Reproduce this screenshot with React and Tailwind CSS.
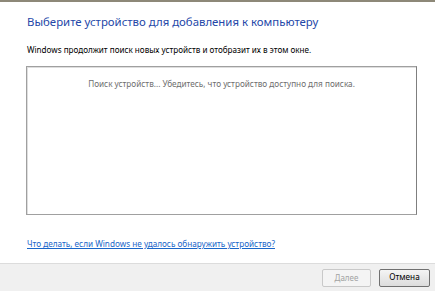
import React from 'react';

const App = () => {
    return (
        <div
            className="w-[435px] h-[291px] bg-white flex flex-col border-t-2 border-[#8d8878] overflow-hidden"
            style={{ fontFamily: '"Noto Sans", "Open Sans", sans-serif' }}
        >
            <div className="flex-1 flex flex-col pl-[27px] pr-[19px]">
                <h1 className="mt-[11px] text-[11.4px] leading-[17px] text-[#2447a8]">
                    Выберите устройство для добавления к компьютеру
                </h1>
                <p className="mt-[14px] text-[8.1px] leading-[12px] text-black">
                    Windows продолжит поиск новых устройств и отобразит их в этом окне.
                </p>
                <div className="mt-[10px] -ml-[1px] w-[391px] h-[149px] border border-[#a0a0a0] border-r-[#7f7f7f] shadow-[inset_1px_1px_0_#dedede] bg-white">
                    <p className="mt-[11px] text-center text-[8.2px] leading-[12px] text-[#6e6e6e]">
                        Поиск устройств... Убедитесь, что устройство доступно для поиска.
                    </p>
                </div>
                <a
                    href="#"
                    className="mt-[23px] text-[8.2px] leading-[12px] text-[#1a66c9] underline self-start"
                >
                    Что делать, если Windows не удалось обнаружить устройство?
                </a>
            </div>
            <div className="h-[28px] bg-[#f0f0f0] border-t border-[#dcdcdc] flex items-center justify-end gap-[8px] pr-[5px]">
                <button className="w-[49px] h-[18px] border border-[#c9c9c9] bg-[#f4f4f4] rounded-[2px] text-[8px] text-[#a3a3a3]">
                    Далее
                </button>
                <button className="w-[51px] h-[18px] border border-[#707070] bg-gradient-to-b from-[#f4f4f4] to-[#dcdcdc] rounded-[2px] text-[8.2px] text-black">
                    Отмена
                </button>
            </div>
        </div>
    );
};

export default App;
